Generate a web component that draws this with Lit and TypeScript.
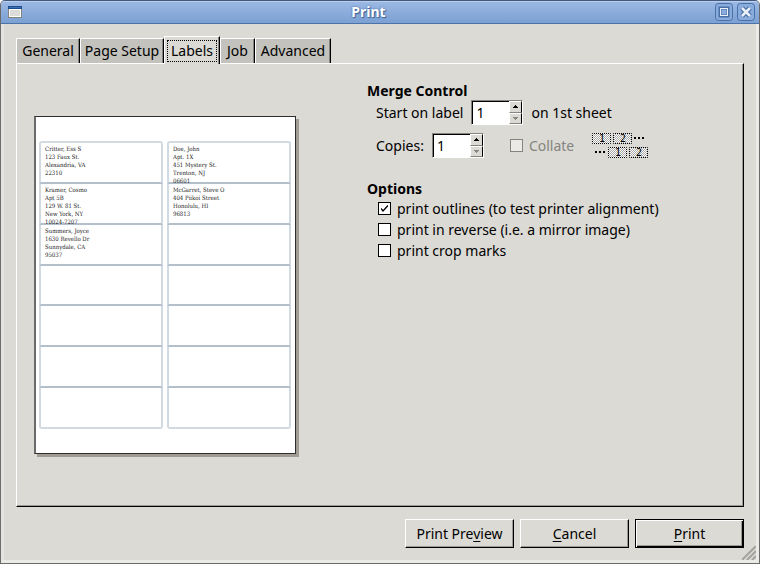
import { LitElement, html, css } from "lit";
import { customElement, property } from "lit/decorators.js";

@customElement("label-sheet")
class LabelSheet extends LitElement {
  static styles = css`
    :host {
      display: block;
    }
    .paper {
      box-sizing: border-box;
      width: 262px;
      border: 1px solid #2e2e2e;
      border-left: 2px solid #6a6a6a;
      background: #fff;
      box-shadow: 3px 3px 0 #a09c93;
      padding: 24px 4px 24px 3px;
    }
    .grid {
      display: grid;
      grid-template-columns: 1fr 1fr;
      grid-template-rows: 43px repeat(6, minmax(0, 1fr));
      column-gap: 4px;
      height: 288px;
    }
    .label {
      box-sizing: border-box;
      border: 2px solid #d2dae1;
      border-top: 0;
      border-bottom: 2px solid #b3c0cc;
      padding: 2px 4px 0;
      font: 6px/8px "DejaVu Serif Condensed", "DejaVu Serif", serif;
      color: #222;
      white-space: pre;
    }
    .label:nth-child(-n + 2) {
      border-top: 2px solid #d2dae1;
      border-radius: 3px 3px 0 0;
    }
    .label:nth-child(n + 13) {
      border-bottom-color: #d2dae1;
      border-radius: 0 0 3px 3px;
    }
  `;
  @property({ attribute: false }) entries: string[] = [];

  render() {
    return html`<div class="paper">
      <div class="grid">
        ${Array.from({ length: 14 }, (_, i) => html`<div class="label">${this.entries[i] ?? ""}</div>`)}
      </div>
    </div>`;
  }
}

@customElement("app-root")
class AppRoot extends LitElement {
  static styles = css`
    :host {
      display: block;
      font: 14px/20px "Noto Sans", "Open Sans", sans-serif;
      color: #000;
    }
    .window {
      box-sizing: border-box;
      min-height: 100vh;
      display: flex;
      flex-direction: column;
      background: #dbdad5;
      border: 1px solid #6b6b6b;
      border-top-color: #44597c;
      border-radius: 5px 5px 0 0;
      box-shadow: inset -3px -3px 0 #ebeae7, inset 3px 0 0 #e6e2e2;
      position: relative;
    }
    header {
      box-sizing: border-box;
      height: 23px;
      display: flex;
      align-items: center;
      padding: 0 4px 0 7px;
      background: linear-gradient(#b8cfee 0 1px, #9bb8e4 1px, #7ba0d2);
      border-bottom: 1px solid #4b73a9;
      border-radius: 4px 4px 0 0;
    }
    h1 {
      flex: 1;
      margin: 0;
      text-align: center;
      font-size: 14px;
      line-height: 20px;
      color: #fff;
      text-shadow: 0 0 2px #3d639b, 1px 1px 1px #3d639b;
    }
    svg {
      display: block;
    }
    .controls {
      display: flex;
      justify-content: flex-end;
      gap: 4px;
    }
    .controls button {
      border: 0;
      padding: 0;
      background: none;
    }
    main {
      flex: 1;
      display: flex;
      flex-direction: column;
      padding: 12px 15px 15px;
    }
    .tabs {
      display: flex;
      align-items: flex-end;
      height: 28px;
      margin-bottom: -1px;
      position: relative;
    }
    .tab {
      box-sizing: border-box;
      height: 25px;
      margin: 0 0 1px;
      padding: 0 2px;
      border: 1px solid #fff;
      border-right-color: #000;
      border-bottom: 0;
      background: #c3c2bc;
      box-shadow: inset -1px 0 0 #85847f;
      font: inherit;
      color: inherit;
      white-space: nowrap;
    }
    .w64 { width: 64px; }
    .w84 { width: 84px; }
    .w56 { width: 56px; }
    .w35 { width: 35px; }
    .w76 { width: 76px; }
    .tab.selected {
      height: 28px;
      margin: 0;
      background: #dbdad5;
    }
    .focus {
      display: block;
      height: 20px;
      border: 1px dotted #000;
      line-height: 20px;
    }
    .panel {
      flex: 1;
      display: grid;
      grid-template-columns: 333px 1fr;
      border: 1px solid #fff;
      border-right-color: #000;
      border-bottom-color: #000;
      box-shadow: inset -1px -1px 0 #9b9a95;
      padding: 18px 17px;
    }
    label-sheet {
      align-self: center;
    }
    h2 {
      margin: 0;
      font-size: 14px;
      line-height: 18px;
    }
    .row {
      display: flex;
      align-items: center;
      height: 25px;
      padding-left: 9px;
      gap: 8px;
    }
    .row + .row {
      margin-top: 8px;
    }
    .options {
      margin-top: 22px;
    }
    .spin {
      box-sizing: border-box;
      display: flex;
      width: 52px;
      height: 25px;
      border: 1px solid #85847f;
      border-right-color: #fff;
      border-bottom-color: #fff;
    }
    .spin input {
      box-sizing: border-box;
      flex: 1;
      min-width: 0;
      border: 0 solid #000;
      border-width: 1px 0 0 1px;
      padding: 0 3px;
      background: #fff;
      font: inherit;
      border-radius: 0;
    }
    .arrows {
      display: flex;
      flex-direction: column;
      width: 13px;
    }
    .arrows button {
      flex: 1;
      display: grid;
      place-items: center;
      min-height: 0;
      padding: 0;
      border: 1px solid #fff;
      border-right-color: #000;
      border-bottom-color: #85847f;
      background: #dbdad5;
    }
    .check {
      display: flex;
      align-items: center;
      gap: 6px;
      height: 21px;
    }
    .check.off {
      color: #85847f;
      margin: 0 10px 0 18px;
    }
    .check input {
      appearance: none;
      box-sizing: border-box;
      width: 13px;
      height: 13px;
      margin: 0;
      border: 1px solid #000;
      background: #fff;
      display: grid;
      place-items: center;
    }
    .check input:disabled {
      border-color: #85847f;
      background: #ebeae7;
    }
    .tick {
      display: grid;
      align-items: center;
      justify-items: center;
    }
    .tick > * {
      grid-area: 1 / 1;
    }
    .tick svg {
      pointer-events: none;
      visibility: hidden;
    }
    .tick input:checked + svg {
      visibility: visible;
    }
    .list {
      padding-left: 11px;
    }
    footer {
      display: flex;
      justify-content: flex-end;
      gap: 6px;
      padding-top: 12px;
    }
    .btn {
      box-sizing: border-box;
      width: 109px;
      height: 29px;
      padding: 0;
      border: 1px solid #fff;
      border-right-color: #000;
      border-bottom-color: #000;
      box-shadow: inset -1px -1px 0 #9b9a95;
      background: #dbdad5;
      font: inherit;
      color: inherit;
    }
    .btn.default {
      border-color: #000;
      box-shadow: inset 1px 1px 0 #fff, inset -1px -1px 0 #000, inset -2px -2px 0 #9b9a95;
    }
    u {
      text-underline-offset: 2px;
    }
    .grip {
      position: absolute;
      right: 3px;
      bottom: 3px;
    }
    .digit {
      font: 10px "DejaVu Sans Mono", monospace;
      text-anchor: middle;
    }
  `;

  private entries = [
    "Critter, Ess S\n123 Faux St.\nAlexandria, VA\n22310",
    "Doe, John\nApt. 1X\n451 Mystery St.\nTrenton, NJ\n06601",
    "Kramer, Cosmo\nApt 5B\n129 W. 81 St.\nNew York, NY\n10024-7207",
    "McGarret, Steve O\n404 Piikoi Street\nHonolulu, HI\n96813",
    "Summers, Joyce\n1630 Revello Dr\nSunnydale, CA\n95037",
  ];

  private spin(id: string) {
    return html`<span class="spin">
      <input id=${id} type="text" inputmode="numeric" value="1" />
      <span class="arrows">
        <button aria-label="Increase"><svg width="5" height="3"><path d="M2 0h1v1h1v1h1v1H0V2h1V1h1z" /></svg></button>
        <button aria-label="Decrease"><svg width="5" height="3"><path d="M0 0h5v1H4v1H3v1H2V2H1V1H0z" fill="#85847f" /></svg></button>
      </span>
    </span>`;
  }

  private option(text: string, checked = false) {
    return html`<label class="check">
      <span class="tick">
        <input type="checkbox" ?checked=${checked} />
        <svg width="7" height="7" fill="none" stroke="#000"><path d="M0 3.500l2 2.500L7 .5" stroke-width="1.300" /></svg>
      </span>
      ${text}
    </label>`;
  }

  render() {
    return html`<div class="window">
      <header>
        <svg width="14" height="12" shape-rendering="crispEdges">
          <rect width="14" height="12" fill="#85857d" />
          <rect width="14" height="3" fill="#1f4d8c" />
          <rect x="1" y="1" width="12" height="1" fill="#3d70b2" />
          <rect x="1" y="3" width="12" height="8" fill="#fff" />
          <rect x="2" y="4" width="10" height="6" fill="#dcdcd8" />
        </svg>
        <h1>Print</h1>
        <div class="controls">
          <button aria-label="Maximize">
            <svg width="18" height="18" fill="none">
              <rect x=".5" y=".5" width="17" height="17" rx="3" fill="#8aacdc" stroke="#486fa6" />
              <rect x="5" y="5" width="8" height="8" stroke="#486fa6" stroke-width="3" />
              <rect x="5.500" y="5.500" width="7" height="7" stroke="#e9f0fa" />
            </svg>
          </button>
          <button aria-label="Close">
            <svg width="18" height="18" fill="none">
              <rect x=".5" y=".5" width="17" height="17" rx="3" fill="#8aacdc" stroke="#486fa6" />
              <path d="M5 5l8 8m0-8l-8 8" stroke="#486fa6" stroke-width="5" />
              <path d="M5 5l8 8m0-8l-8 8" stroke="#e9f0fa" stroke-width="2.500" />
            </svg>
          </button>
        </div>
      </header>
      <main>
        <div class="tabs" role="tablist">
          <button class="tab w64" role="tab">General</button>
          <button class="tab w84" role="tab">Page Setup</button>
          <button class="tab w56 selected" role="tab" aria-selected="true"><span class="focus">Labels</span></button>
          <button class="tab w35" role="tab">Job</button>
          <button class="tab w76" role="tab">Advanced</button>
        </div>
        <div class="panel" role="tabpanel">
          <label-sheet .entries=${this.entries}></label-sheet>
          <div>
            <section>
              <h2>Merge Control</h2>
              <div class="row">
                <label for="start">Start on label</label>
                ${this.spin("start")}
                <span>on 1st sheet</span>
              </div>
              <div class="row">
                <label for="copies">Copies:</label>
                ${this.spin("copies")}
                <label class="check off"><input type="checkbox" disabled />Collate</label>
                <svg width="57" height="25" aria-hidden="true">
                  <defs>
                    <pattern id="mesh" width="2" height="2" patternUnits="userSpaceOnUse">
                      <rect width="2" height="2" fill="#fff" />
                      <path d="M0 0h1v1H0zM1 1h1v1H1z" fill="#aaa" />
                    </pattern>
                  </defs>
                  <g fill="url(#mesh)" stroke="#000" stroke-dasharray="1 1" stroke-dashoffset=".5">
                    <rect x=".5" y=".5" width="18" height="10" />
                    <rect x="21.500" y=".5" width="18" height="10" />
                    <rect x="16.500" y="14.500" width="18" height="10" />
                    <rect x="37.500" y="14.500" width="18" height="10" />
                  </g>
                  <g class="digit">
                    <text x="10" y="9">1</text>
                    <text x="31" y="9">2</text>
                    <text x="26" y="23">1</text>
                    <text x="47" y="23">2</text>
                  </g>
                  <path d="M42 4h2v2h-2zm4 0h2v2h-2zm4 0h2v2h-2zM3 18h2v2H3zm4 0h2v2H7zm4 0h2v2h-2z" />
                </svg>
              </div>
            </section>
            <section class="options">
              <h2>Options</h2>
              <div class="list">
                ${this.option("print outlines (to test printer alignment)", true)}
                ${this.option("print in reverse (i.e. a mirror image)")}
                ${this.option("print crop marks")}
              </div>
            </section>
          </div>
        </div>
        <footer>
          <button class="btn">Print Pre<u>v</u>iew</button>
          <button class="btn"><u>C</u>ancel</button>
          <button class="btn default"><u>P</u>rint</button>
        </footer>
      </main>
      <svg class="grip" width="14" height="14" stroke="#a3a29d" stroke-width="2">
        <path d="M0 14L14 0M5 14L14 5M10 14L14 10" />
      </svg>
    </div>`;
  }
}
